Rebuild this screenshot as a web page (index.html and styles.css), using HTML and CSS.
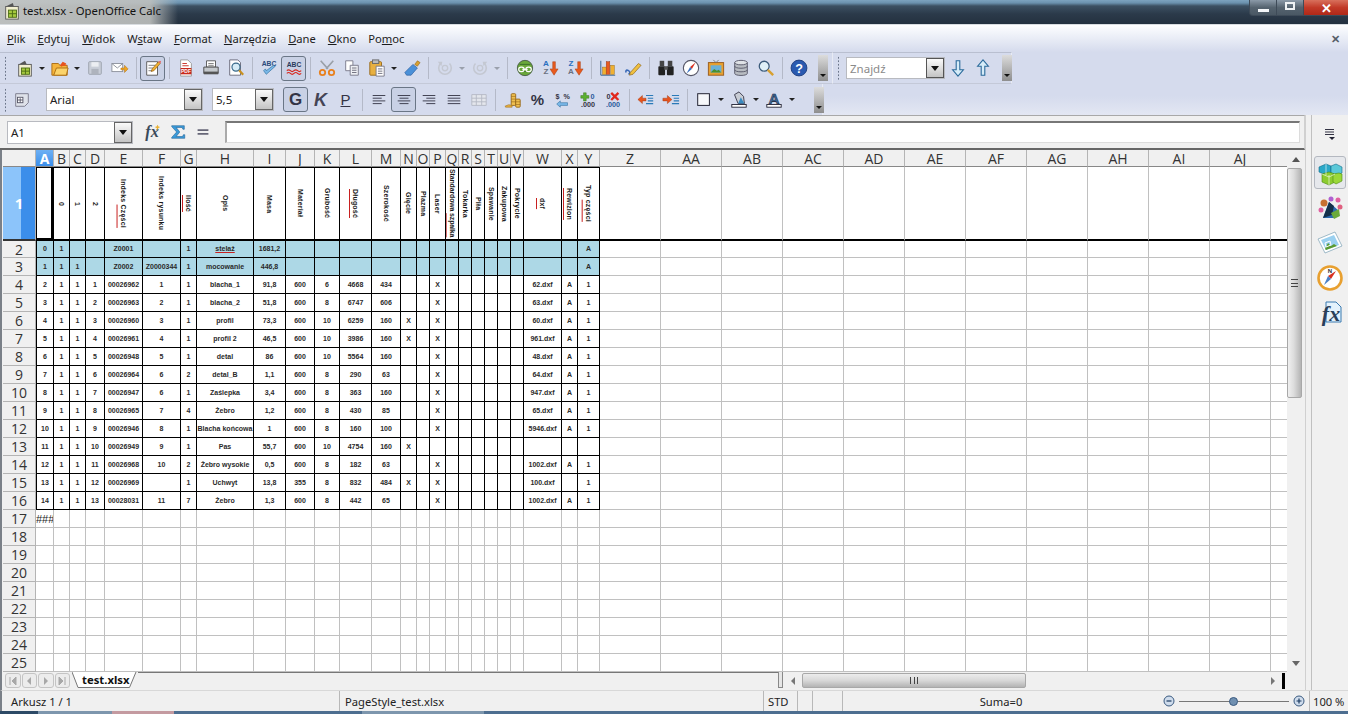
FILE: index.html
```html
<!DOCTYPE html>
<html lang="pl">
<head>
<meta charset="utf-8">
<title>test.xlsx - OpenOffice Calc</title>
<link rel="stylesheet" href="styles.css">
</head>
<body>
<div class="app">
  <header class="titlebar">
    <svg class="appicon" width="18" height="18" viewBox="0 0 20 20"><path d="M3 5l8-4 1 4z" fill="#555"/><rect x="3" y="5" width="14" height="14" fill="#f2efd0" stroke="#555"/><rect x="6" y="9" width="9" height="8" fill="#a5c93c" stroke="#4a6a14"/><path d="M6 13h9M10.500 9v8" stroke="#4a6a14"/></svg>
    <span class="apptitle">test.xlsx - OpenOffice Calc</span>
    <div class="winbtns">
      <span class="wb wmin"><i></i></span>
      <span class="wb wmax"><i></i></span>
      <span class="wb wclose">✕</span>
    </div>
  </header>

  <nav class="menubar">
    <span><u>P</u>lik</span><span><u>E</u>dytuj</span><span><u>W</u>idok</span><span>W<u>s</u>taw</span><span><u>F</u>ormat</span><span><u>N</u>arzędzia</span><span><u>D</u>ane</span><span><u>O</u>kno</span><span>Po<u>m</u>oc</span>
    <span class="docclose">✕</span>
  </nav>

  <div class="toolbars">
    <div class="tbrow">
      <div class="toolbar tb1">
        <span class="grip"></span>
        <span class="b"><svg viewBox="0 0 20 20"><path d="M3 6l7-4 2 4z" fill="#555"/><rect x="3" y="6" width="14" height="13" fill="#f2efd0" stroke="#555"/><rect x="6" y="10" width="9" height="7" fill="#a5c93c" stroke="#4a6a14"/><path d="M6 13.500h9M10.500 10v7" stroke="#4a6a14"/></svg></span>
        <span class="dd"></span>
        <span class="b"><svg viewBox="0 0 20 20"><path d="M1 5h7l2 2h8v11H1z" fill="#f5b43c" stroke="#a86a10"/><path d="M3 18l3-8h13l-2 8z" fill="#fbd36a" stroke="#a86a10"/><path d="M10 7l3-4 4 2-1 1 2 1-6 1 0 1z" fill="#e8531e"/></svg></span>
        <span class="dd"></span>
        <span class="b"><svg viewBox="0 0 20 20"><rect x="3" y="3" width="14" height="14" rx="1" fill="#c9ced8" stroke="#9aa0ac"/><rect x="6" y="3.500" width="8" height="5" fill="#eceef2"/><rect x="6" y="11" width="8" height="6" fill="#aeb3bd"/></svg></span>
        <span class="b"><svg viewBox="0 0 20 20"><rect x="1" y="5" width="12" height="9" fill="#fff" stroke="#8a8f9a"/><path d="M1 5l6 5 6-5" fill="none" stroke="#8a8f9a"/><path d="M11 10h4V7l4 4-4 4v-3h-4z" fill="#f0a520" stroke="#a86a10" stroke-width=".5"/></svg></span>
        <span class="sep"></span>
        <span class="b on"><svg viewBox="0 0 20 20"><path d="M3 3h12v15H3z" fill="#fff" stroke="#555"/><path d="M5 7h8M5 10h6M5 13h4" stroke="#777"/><path d="M8 14l1-3 7-8 2 2-7 8z" fill="#f0b030" stroke="#8a5a10" stroke-width=".7"/><path d="M16 3l2 2 1-2-1-1z" fill="#e86060"/></svg></span>
        <span class="sep"></span>
        <span class="b"><svg viewBox="0 0 20 20"><path d="M4 1h8l4 4v14H4z" fill="#fff" stroke="#999"/><rect x="4" y="10" width="12" height="7" fill="#c8281e"/><text x="10" y="15.800" class="ti6">PDF</text><path d="M6 5h5M6 7.500h7" stroke="#c8281e"/></svg></span>
        <span class="b"><svg viewBox="0 0 20 20"><path d="M5 2h10v7H5z" fill="#fff" stroke="#555"/><path d="M7 5h6M7 7h6" stroke="#777"/><path d="M2 9h16v7H2z" fill="#c4c8cc" stroke="#444"/><rect x="2" y="14" width="16" height="3" fill="#555"/></svg></span>
        <span class="b"><svg viewBox="0 0 20 20"><path d="M3 1h9l3 3v14H3z" fill="#fff" stroke="#667"/><circle cx="10" cy="9" r="4.500" fill="#d6ecf6" stroke="#3a6a8a" stroke-width="1.300"/><path d="M13.500 12.500l4.500 5" stroke="#c89020" stroke-width="2.400"/></svg></span>
        <span class="sep"></span>
        <span class="b"><svg viewBox="0 0 20 20"><text x="10" y="8" class="tabc" fill="#2a4a7a">ABC</text><path d="M4 13l3 4 10-9-2-1-8 6-1-2z" fill="#7ab8e8" stroke="#2a6a9a" stroke-width=".7"/></svg></span>
        <span class="b on"><svg viewBox="0 0 20 20"><text x="10" y="9" class="tabc" fill="#2a3a5a">ABC</text><path d="M2 13q2-2 4 0t4 0 4 0 4 0M2 16q2-2 4 0t4 0 4 0 4 0" fill="none" stroke="#d8281e" stroke-width="1.300"/></svg></span>
        <span class="sep"></span>
        <span class="b"><svg viewBox="0 0 20 20"><path d="M3 2l8 9M17 2l-8 9" stroke="#9aa0a8" stroke-width="1.800"/><circle cx="5" cy="15" r="3" fill="none" stroke="#e8801e" stroke-width="2"/><circle cx="15" cy="15" r="3" fill="none" stroke="#e8801e" stroke-width="2"/></svg></span>
        <span class="b"><svg viewBox="0 0 20 20"><path d="M3 2h8v11H3z" fill="#fff" stroke="#778"/><path d="M8 7h9v11H8z" fill="#eef0f4" stroke="#778"/><path d="M10 10h5M10 12.500h5M10 15h5" stroke="#667"/></svg></span>
        <span class="b"><svg viewBox="0 0 20 20"><rect x="2" y="3" width="13" height="15" rx="1" fill="#e8b040" stroke="#96681a"/><rect x="5" y="1" width="7" height="4" fill="#bbb" stroke="#666"/><path d="M9 8h9v11H9z" fill="#fff" stroke="#778"/><path d="M11 11h5M11 13.500h5M11 16h5" stroke="#667"/></svg></span>
        <span class="dd"></span>
        <span class="b"><svg viewBox="0 0 20 20"><path d="M13 6l3-4 3 2-3 4z" fill="#d8a030" stroke="#8a6010" stroke-width=".6"/><path d="M2 15l9-9 5 4-7 8-5 0z" fill="#4a90d8" stroke="#2a5a9a" stroke-width=".7"/></svg></span>
        <span class="sep wide"></span>
        <span class="b"><svg viewBox="0 0 20 20"><circle cx="10" cy="10" r="3" fill="none" stroke="#c4c8d2" stroke-width="1.500"/><path d="M5 5a7 7 0 1 0 10 0" fill="none" stroke="#c4c8d2" stroke-width="1.800"/><path d="M2 3l5 0-1 5z" fill="#c4c8d2"/></svg></span>
        <span class="dd off"></span>
        <span class="b"><svg viewBox="0 0 20 20"><path d="M15 5a7 7 0 1 1-10 0" fill="none" stroke="#c4c8d2" stroke-width="1.800"/><circle cx="10" cy="10" r="3" fill="none" stroke="#c4c8d2" stroke-width="1.500"/><path d="M18 3l-5 0 1 5z" fill="#c4c8d2"/></svg></span>
        <span class="dd off"></span>
        <span class="sep s10"></span>
        <span class="b"><svg viewBox="0 0 20 20"><circle cx="10" cy="10" r="8.500" fill="#6aa83a" stroke="#4a5a4a"/><path d="M4 6h12M3 14h14" stroke="#3a6a2a"/><rect x="3" y="9" width="6" height="5" rx="2.500" fill="none" stroke="#fff" stroke-width="1.300"/><rect x="11" y="9" width="6" height="5" rx="2.500" fill="none" stroke="#fff" stroke-width="1.300"/><path d="M7 11.500h6" stroke="#fff" stroke-width="1.300"/></svg></span>
        <span class="b"><svg viewBox="0 0 20 20"><text x="5.500" y="8" class="tsort" fill="#2a70c0">A</text><text x="5.500" y="17" class="tsort" fill="#6a7080">Z</text><path d="M13 3h3v8h3l-4.500 7L10 11h3z" fill="#e85a1e" stroke="#a03a10" stroke-width=".5"/></svg></span>
        <span class="b"><svg viewBox="0 0 20 20"><text x="5.500" y="8" class="tsort" fill="#2a70c0">Z</text><text x="5.500" y="17" class="tsort" fill="#6a7080">A</text><path d="M13 3h3v8h3l-4.500 7L10 11h3z" fill="#e85a1e" stroke="#a03a10" stroke-width=".5"/></svg></span>
        <span class="sep"></span>
        <span class="b"><svg viewBox="0 0 20 20"><path d="M2 2v16h16" fill="none" stroke="#2a5a8a"/><rect x="4" y="9" width="4" height="8" fill="#f0b030" stroke="#96681a" stroke-width=".5"/><rect x="8" y="3" width="4" height="14" fill="#e85a1e" stroke="#96381a" stroke-width=".5"/><rect x="13" y="7" width="4" height="10" fill="#f0b030" stroke="#96681a" stroke-width=".5"/></svg></span>
        <span class="b"><svg viewBox="0 0 20 20"><path d="M2 15q0-4 3-2t0 4" fill="none" stroke="#3a6ab8" stroke-width="1.800"/><path d="M7 15l9-10 3 2-9 10-4 1z" fill="#f0c040" stroke="#8a6010" stroke-width=".7"/></svg></span>
        <span class="sep"></span>
        <span class="b"><svg viewBox="0 0 20 20"><rect x="3" y="2" width="5" height="6" fill="#444"/><rect x="12" y="2" width="5" height="6" fill="#444"/><rect x="1.500" y="8" width="7.500" height="10" rx="1" fill="#222"/><rect x="11" y="8" width="7.500" height="10" rx="1" fill="#222"/><rect x="8" y="8" width="4" height="4" fill="#555"/></svg></span>
        <span class="b"><svg viewBox="0 0 20 20"><circle cx="10" cy="10" r="8.500" fill="#fff" stroke="#556" stroke-width="1.200"/><path d="M15 4l-4 7-2-2z" fill="#d83020"/><path d="M5 16l4-7 2 2z" fill="#3a70c0"/></svg></span>
        <span class="b"><svg viewBox="0 0 20 20"><rect x="1.500" y="4" width="17" height="14" fill="#e8a030" stroke="#96581a"/><path d="M10 4l-3-3M10 4l3-3" stroke="#777"/><rect x="4" y="7" width="12" height="8" fill="#6ab0d8"/><path d="M4 15l4-4 3 2 2-1 3 3z" fill="#4a9030"/></svg></span>
        <span class="b"><svg viewBox="0 0 20 20"><path d="M3 4v12c0 3 14 3 14 0V4" fill="#b8bcc2" stroke="#556"/><ellipse cx="10" cy="4" rx="7" ry="2.500" fill="#dfe2e6" stroke="#556"/><path d="M3 8c0 3 14 3 14 0M3 12c0 3 14 3 14 0" fill="none" stroke="#556"/></svg></span>
        <span class="b"><svg viewBox="0 0 20 20"><circle cx="8" cy="8" r="5.500" fill="#dff0f8" stroke="#3a5a7a" stroke-width="1.400"/><path d="M12 12l6 6" stroke="#d8a030" stroke-width="2.600"/></svg></span>
        <span class="sep"></span>
        <span class="b"><svg viewBox="0 0 20 20"><circle cx="10" cy="10" r="8.800" fill="#2a5ab0" stroke="#1a3a7a"/><text x="10" y="15" class="thelp">?</text></svg></span>
        <span class="ovf"></span>
      </div>
      <div class="toolbar tb2">
        <span class="grip g2"></span>
        <div class="combo findc"><span class="ctext gray">Znajdź</span><span class="cbtn dark"></span></div>
        <span class="b b2"><svg viewBox="0 0 20 20"><path d="M8 2h4v10h4l-6 7-6-7h4z" fill="#d6ecf8" stroke="#2a6a9a" stroke-width="1.200"/></svg></span>
        <span class="b"><svg viewBox="0 0 20 20"><path d="M8 18h4V8h4l-6-7-6 7h4z" fill="#d6ecf8" stroke="#2a6a9a" stroke-width="1.200"/></svg></span>
        <span class="ovf o2"></span>
      </div>
    </div>
    <div class="tbrow">
      <div class="toolbar tb3">
        <span class="grip"></span>
        <span class="b stylebtn"><svg viewBox="0 0 20 20"><path d="M3 3h14v10l-4 4H3z" fill="#dfe2ea" stroke="#778"/><rect x="5" y="7" width="6" height="6" fill="#fff" stroke="#556"/><path d="M8 8v5M5 10h6" stroke="#556"/></svg></span>
        <div class="combo fontc"><span class="ctext">Arial</span><span class="cbtn"></span></div>
        <div class="combo sizec"><span class="ctext">5,5</span><span class="cbtn"></span></div>
        <span class="b on tx bold">G</span>
        <span class="b tx ital">K</span>
        <span class="b tx und">P</span>
        <span class="sep"></span>
        <span class="b"><svg viewBox="0 0 20 20"><path d="M3 5h14M3 8h10M3 11h14M3 14h10" stroke="#334"/></svg></span>
        <span class="b on"><svg viewBox="0 0 20 20"><path d="M3 5h14M5 8h10M3 11h14M5 14h10" stroke="#334"/></svg></span>
        <span class="b"><svg viewBox="0 0 20 20"><path d="M3 5h14M7 8h10M3 11h14M7 14h10" stroke="#334"/></svg></span>
        <span class="b"><svg viewBox="0 0 20 20"><path d="M3 5h14M3 8h14M3 11h14M3 14h14" stroke="#334"/></svg></span>
        <span class="b"><svg viewBox="0 0 20 20"><path d="M2 4h16v12H2zM2 8h16M2 12h16M7 4v12M13 4v12" fill="#e4e6ec" stroke="#b4b8c4"/></svg></span>
        <span class="sep s9"></span>
        <span class="b"><svg viewBox="0 0 20 20"><path d="M1 17q4-3 8-1v2H2z" fill="#e8b040" stroke="#96681a" stroke-width=".6"/><rect x="8" y="3" width="5" height="13" rx="1" fill="#f0c050" stroke="#96681a"/><rect x="13" y="9" width="5" height="9" rx="1" fill="#f0c050" stroke="#96681a"/><path d="M8 6h5M8 9h5M8 12h5M13 12h5M13 15h5" stroke="#96681a" stroke-width=".7"/></svg></span>
        <span class="b tx pct">%</span>
        <span class="b"><svg viewBox="0 0 20 20"><text x="4" y="9" class="tnum" fill="#334">$</text><text x="14" y="9" class="tnum" fill="#334">%</text><path d="M15 13H7v-2l-4 3.500L7 18v-2h8z" fill="#7ab8e8" stroke="#2a6a9a" stroke-width=".6"/></svg></span>
        <span class="b"><svg viewBox="0 0 20 20"><path d="M5 2h3v3h3v3H8v3H5V8H2V5h3z" fill="#5ab030" stroke="#3a7020" stroke-width=".5"/><text x="15" y="9" class="tnum" fill="#2a5a9a">0</text><text x="10" y="18" class="tnum" fill="#334">.000</text></svg></span>
        <span class="b"><svg viewBox="0 0 20 20"><text x="5" y="9" class="tnum" fill="#334">0</text><text x="10" y="18" class="tnum" fill="#2a5a9a">.000</text><path d="M8 2l8 8M16 2l-8 8" stroke="#e0281e" stroke-width="2.600"/></svg></span>
        <span class="sep"></span>
        <span class="b"><svg viewBox="0 0 20 20"><path d="M10 5h8M12 8h6M12 11h6M10 14h8" stroke="#2a7ab8" stroke-width="1.200"/><path d="M10 8H6V5l-5 4.500L6 14v-3h4z" fill="#e8531e" stroke="#a03a10" stroke-width=".5"/></svg></span>
        <span class="b"><svg viewBox="0 0 20 20"><path d="M11 5h8M13 8h6M13 11h6M11 14h8" stroke="#2a7ab8" stroke-width="1.200"/><path d="M1 8h5V5l5 4.500L6 14v-3H1z" fill="#e8531e" stroke="#a03a10" stroke-width=".5"/></svg></span>
        <span class="sep"></span>
        <span class="b"><svg viewBox="0 0 20 20"><rect x="3" y="3" width="13" height="13" fill="#f6f7fa" stroke="#223" stroke-width="1.100"/></svg></span>
        <span class="dd"></span>
        <span class="b"><svg viewBox="0 0 20 20"><path d="M5 4l5-3 5 5 1 8H9z" fill="#c8ccd4" stroke="#334"/><path d="M12 7l4 7H9z" fill="#3a8ac0"/><rect x="2" y="15" width="16" height="3" fill="#fff" stroke="#223"/></svg></span>
        <span class="dd"></span>
        <span class="b"><svg viewBox="0 0 20 20"><text x="10" y="14" class="tcolor">A</text><rect x="2" y="15" width="16" height="3" fill="#fff" stroke="#223"/></svg></span>
        <span class="dd d12"></span>
        <span class="ovf o3"></span>
      </div>
    </div>
  </div>

  <div class="main">
    <div class="mainleft">
      <div class="formulabar">
        <div class="combo namec"><span class="ctext">A1</span><span class="cbtn"></span></div>
        <span class="b"><svg viewBox="0 0 20 20"><text x="9" y="16" class="tfx">fx</text><path d="M15 2l1 2 2 .5-2 1L15 8l-1-2.500-2-1 2-.5z" fill="#e8b030"/></svg></span>
        <span class="b"><svg viewBox="0 0 20 20"><path d="M3 3h14v4h-1.500l-1-2H8l4 5-4 5h7l1-2h1.500v4H3v-1l5.500-6L3 4z" fill="#3a9ad8" stroke="#1a5a90" stroke-width=".6"/></svg></span>
        <span class="b"><svg viewBox="0 0 20 20"><path d="M4 7h12v2H4zM4 11h12v2H4z" fill="#667"/></svg></span>
        <div class="finput"></div>
      </div>
      <div class="sheet">
        <div class="gridwrap"><table class="grid" id="grid"></table></div>
        <div class="vscroll">
          <span class="vbtn"><i class="tri up"></i></span>
          <div class="vtrack"><div class="vthumb"><i></i></div></div>
          <span class="vbtn dn"><i class="tri down"></i></span>
        </div>
      </div>
      <div class="tabbar">
        <div class="tabnav">
          <span><svg width="10" height="10" viewBox="0 0 10 10"><path d="M2 1v8M8 1L4 5l4 4z" fill="#a8a8a8" stroke="#a8a8a8"/></svg></span>
          <span><svg width="10" height="10" viewBox="0 0 10 10"><path d="M7 1L3 5l4 4z" fill="#a8a8a8"/></svg></span>
          <span><svg width="10" height="10" viewBox="0 0 10 10"><path d="M3 1l4 4-4 4z" fill="#a8a8a8"/></svg></span>
          <span><svg width="10" height="10" viewBox="0 0 10 10"><path d="M8 1v8M2 1l4 4-4 4z" fill="#a8a8a8" stroke="#a8a8a8"/></svg></span>
        </div>
        <div class="tab">
          <svg width="66" height="17" viewBox="0 0 66 17"><path d="M0 0l6 15.500h51.500L64 0" fill="#fff" stroke="#777"/></svg>
          <span>test.xlsx</span>
        </div>
        <div class="tabrest"></div>
        <span class="tabsplit"></span>
        <div class="hscroll">
          <i class="tri left"></i>
          <div class="hthumb"><i></i></div>
          <i class="tri right"></i>
          <span class="hend"></span>
        </div>
        <div class="corner"></div>
      </div>
    </div>
    <div class="splitter"></div>
    <aside class="sidebar">
      <span class="smenu"><svg width="14" height="14" viewBox="0 0 14 14"><path d="M2 2.500h9M2 5h9M2 7.500h9" stroke="#334"/><path d="M6 10h6l-3 3z" fill="#223"/></svg></span>
      <span class="sb active"><svg width="26" height="26" viewBox="0 0 26 26"><path d="M2 7l7-3 5 2v7l-5 2-7-3z" fill="#2aa8c8" stroke="#106a8a" stroke-width=".6"/><path d="M14 6l5-2 6 3v6l-6 2-5-2z" fill="#5ac8d8" stroke="#106a8a" stroke-width=".6"/><path d="M5 14l7-2 6 2v8l-6 3-7-3z" fill="#8ccc30" stroke="#4a8a10" stroke-width=".6"/><path d="M16 14l6-1 3 1v7l-6 3-3-2z" fill="#9ad838" stroke="#4a8a10" stroke-width=".6"/><path d="M12 15v10M5 14l7 3 6-3M9 4v11" stroke="#fff" stroke-width=".6" fill="none"/></svg></span>
      <span class="sb"><svg width="26" height="26" viewBox="0 0 26 26"><path d="M6 23l6-16 10 9-4 7z" fill="#2a6ab0"/><path d="M12 7l5 4-2 9-9 3z" fill="#15304a"/><path d="M14 18l8-4 1 7-6 3z" fill="#6aaa3a"/><circle cx="7" cy="8" r="3.500" fill="#c87030"/><circle cx="4" cy="15" r="2.500" fill="#e060a0"/><circle cx="14" cy="4" r="2.500" fill="#b060d0"/><circle cx="21" cy="5" r="2.500" fill="#e060a0"/><circle cx="23" cy="12" r="2.500" fill="#e06080"/></svg></span>
      <span class="sb"><svg width="26" height="26" viewBox="0 0 26 26"><path d="M1 9L18 2l7 14-17 7z" fill="#fff" stroke="#8ab" stroke-width=".8"/><path d="M4 10L17 5l5 10-13 5z" fill="#9ad0f0"/><path d="M8 19l3-6 3 3 3-2 3 2-11 4z" fill="#5a9a30"/><path d="M8 13l5-2 1 4-5 2z" fill="none" stroke="#fff"/></svg></span>
      <span class="sb"><svg width="26" height="26" viewBox="0 0 26 26"><circle cx="13" cy="13" r="11.500" fill="#fff" stroke="#e8a030" stroke-width="2.600"/><path d="M19 6l-5 8-3-3z" fill="#d83020"/><path d="M7 20l4-9 3 3z" fill="#4a80c8"/><text x="13" y="8" class="tn">N</text></svg></span>
      <span class="sb"><svg width="26" height="26" viewBox="0 0 26 26"><path d="M9 2h10l5 5v15H9z" fill="#e4f2fc" stroke="#3a7ab0"/><text x="14" y="21" class="tsfx">fx</text></svg></span>
    </aside>
  </div>

  <footer class="statusbar">
    <span class="st s1">Arkusz 1 / 1</span>
    <span class="st s2">PageStyle_test.xlsx</span>
    <span class="st s3">STD</span>
    <span class="st s4"></span>
    <span class="st s5"></span>
    <span class="st s6">Suma=0</span>
    <span class="st s7">
      <svg width="14" height="14" viewBox="0 0 14 14"><circle cx="7" cy="7" r="5" fill="#cfdcec" stroke="#3a5a80"/><path d="M4.500 7h5" stroke="#1a3a60" stroke-width="1.200"/></svg>
      <span class="track"><i></i></span>
      <svg width="14" height="14" viewBox="0 0 14 14"><circle cx="7" cy="7" r="5" fill="#cfdcec" stroke="#3a5a80"/><path d="M4.500 7h5M7 4.500v5" stroke="#1a3a60" stroke-width="1.200"/></svg>
    </span>
    <span class="st s8">100 %</span>
  </footer>
  <div class="taskstrip"></div>
</div>
<script src="script.js"></script>
</body>
</html>
```

FILE: styles.css
```css
* { box-sizing: border-box; }
html, body { margin: 0; padding: 0; height: 100%; overflow: hidden; }
body { font-family: "Noto Sans", "Open Sans", sans-serif; font-size: 11.200px; color: #222; }

.app { width: 1348px; height: 714px; display: flex; flex-direction: column; overflow: hidden; background: #f0f0f0; }

/* title bar */
.titlebar {
  height: 25px; flex: none; display: flex; align-items: flex-start; padding-left: 3px;
  border-bottom: 1px solid #d8dce0;
  background:
    linear-gradient(90deg, rgba(196,198,196,.95) 0, rgba(190,192,190,.9) 150px, rgba(60,80,100,0) 178px),
    linear-gradient(180deg, #7da3bf 0, #6a90ac 3px, #3c5062 6px, #2b3a4a 14px, #24313f 100%);
}
.appicon { margin-top: 2px; flex: none; }
.apptitle { margin: 2px 0 0 2px; font-size: 11.300px; line-height: 18px; color: #111; white-space: nowrap; }
.winbtns { margin-left: auto; display: flex; height: 17px; }
.wb { display: flex; align-items: center; justify-content: center; height: 16px; border: 1px solid #3e4b58; border-top: 0; color: #fff; }
.wmin { width: 28px; border-radius: 0 0 0 4px; background: linear-gradient(180deg, #8b9aa8, #55636f 50%, #4a5864); }
.wmin i { width: 11px; height: 3px; margin-top: 6px; background: #f4f6f8; }
.wmax { width: 27px; border-left: 0; background: linear-gradient(180deg, #8b9aa8, #55636f 50%, #4a5864); }
.wmax i { width: 10px; height: 8px; border: 2px solid #eef2f4; margin-bottom: 3px; }
.wclose { width: 44px; border-left: 0; border-right: 0; font-size: 13px; font-weight: bold; background: linear-gradient(180deg, #d8705c, #c23a28 50%, #b02818); }

/* menu */
.menubar {
  height: 27px; flex: none; display: flex; align-items: center; gap: 12px; padding: 0 0 0 7px;
  font-size: 11.200px; color: #1c1c1c;
  background: linear-gradient(180deg, #fff 0, #f4f6fb 6px, #d5dbed 100%);
}
.menubar u { text-underline-offset: 1px; }
.docclose { margin-left: auto; width: 17px; font-size: 11px; font-weight: bold; color: #555e68; }

/* toolbars */
.toolbars { height: 63px; flex: none; background: linear-gradient(180deg, #d5dbed 0, #d5dbed 70%, #e3e7f3 100%); }
.tbrow { height: 31px; display: flex; align-items: stretch; }
.tbrow:first-child { height: 32px; }
.toolbar { display: flex; align-items: center; background: #d5dbed; border-top: 1px solid #b9bfd0; border-bottom: 1px solid #c4c9d8; border-right: 1px solid #e8ebf4; }
.tb1 { width: 833px; }
.tb2 { width: 179px; }
.tb3 { width: 823px; border-top: 0; border-bottom: 0; }
.grip { flex: none; width: 12px; height: 24px; background: radial-gradient(circle, #6a7488 .7px, transparent 1px) 4px 0 / 3px 3.500px repeat-y; }
.g2 { width: 13px; }
.b { flex: none; width: 25px; height: 25px; display: flex; align-items: center; justify-content: center; border: 1px solid transparent; border-radius: 3px; }
.b svg { width: 18px; height: 18px; display: block; }
.b.on { border-color: #6a7686; background: #c9d1e5; }
.dd { flex: none; width: 10px; height: 25px; display: flex; align-items: center; justify-content: center; }
.dd::after { content: ""; border: 3px solid transparent; border-top: 3.500px solid #222; border-bottom: 0; }
.dd.off::after { border-top-color: #9aa0ac; }
.dd.d12 { width: 12px; }
.sep { flex: none; width: 8px; height: 22px; background: linear-gradient(#b4b9c8, #b4b9c8) center / 1px 100% no-repeat; }
.sep.wide { width: 8px; }
.sep.s10 { width: 10px; }
.sep.s9 { width: 9px; }
.ovf { flex: none; width: 10px; height: 26px; margin-left: 7px; position: relative; background: linear-gradient(180deg, #dcdcdc, #8e8e8e); }
.ovf::after { content: ""; position: absolute; left: 2px; bottom: 4px; border: 3px solid transparent; border-top: 3.500px solid #111; border-bottom: 0; }
.o2 { margin-left: 7px; }
.o3 { margin-left: 16px; }
.tx { font-family: "Liberation Sans", sans-serif; font-weight: bold; font-size: 17px; color: #334; line-height: 1; }
.bold { font-size: 17px; }
.ital { font-style: italic; font-size: 18px; color: #445; }
.und { text-decoration: underline; font-weight: normal; font-size: 15px; }
.pct { font-size: 15px; }
.stylebtn { margin-left: -3px; margin-right: 12px; }

.ti6 { font: bold 5.500px "Liberation Sans", sans-serif; fill: #fff; text-anchor: middle; }
.tabc { font: bold 7.500px "Liberation Sans", sans-serif; text-anchor: middle; }
.tsort { font: bold 9px "Liberation Sans", sans-serif; text-anchor: middle; }
.tnum { font: bold 8px "Liberation Sans", sans-serif; text-anchor: middle; }
.thelp { font: bold 14px "Liberation Sans", sans-serif; fill: #fff; text-anchor: middle; }
.tcolor { font: bold 17px "Liberation Sans", sans-serif; fill: #3a6a9a; stroke: #223; stroke-width: .6px; text-anchor: middle; }
.tfx { font: italic bold 18px "Liberation Serif", serif; fill: #3a4a5a; text-anchor: middle; }
.tn { font: bold 6px "Liberation Sans", sans-serif; fill: #333; text-anchor: middle; }
.tsfx { font: italic bold 22px "Liberation Serif", serif; fill: #2a3f5a; text-anchor: middle; }

/* combos */
.combo { flex: none; height: 23px; display: flex; align-items: center; justify-content: space-between; background: #fff; border: 1px solid #b8bac0; }
.ctext { padding-left: 3px; font-size: 11.500px; color: #222; }
.ctext.gray { color: #8a8a8a; }
.cbtn { flex: none; width: 18px; height: 100%; position: relative; border: 1px solid #666; background: linear-gradient(180deg, #fafafa, #c4c4c4); }
.cbtn::after { content: ""; position: absolute; left: 4px; top: 7px; border: 4px solid transparent; border-top: 5px solid #111; border-bottom: 0; }
.cbtn.dark { border-color: #555; }
.fontc { width: 157px; }
.sizec { width: 62px; margin: 0 9px 0 9px; }
.findc { width: 99px; height: 22px; }
.namec { width: 126px; height: 23px; margin: 0 7px 0 7px; }

/* main */
.main { flex: 1; min-height: 0; display: flex; }
.mainleft { width: 1305px; flex: none; display: flex; flex-direction: column; }
.formulabar { height: 35px; flex: none; display: flex; align-items: center; border-top: 1px solid #a8a8a8; border-bottom: 2px solid #666; background: #f0f0f0; border-right: 1px solid #d0d0d0; }
.finput { width: 1075px; height: 22px; margin-left: 10px; background: #fff; border: 1px solid #dcdcdc; border-top: 2px solid #777; border-left: 2px solid #aaa; }

.sheet { height: 522px; flex: none; display: flex; padding-left: 1px; border-left: 2px solid #7a8088; }
.gridwrap { width: 1284px; height: 522px; overflow: hidden; flex: none; background: #fff; }
.grid { width: 1329px; border-collapse: separate; border-spacing: 0; table-layout: fixed; font-family: "Liberation Sans", Arial, sans-serif; }
.grid td, .grid th { padding: 0; height: 18px; line-height: 10px; border-right: 1px solid #c0c0c0; border-bottom: 1px solid #c0c0c0; text-align: center; vertical-align: middle; overflow: hidden; white-space: nowrap; font-size: 7px; font-weight: bold; color: #2a2a2a; }
.grid th { font-family: "Open Sans", "Noto Sans", sans-serif; line-height: 15px; background: #f0f0f0; font-weight: normal; color: #333; border-color: #b4b4b4; font-size: 14px; }
.grid .hc { height: 17px; border-bottom: 1px solid #888; }
.grid .hc.sel { background: linear-gradient(180deg, #6db0f4, #3b8eea); color: #fff; font-weight: bold; }
.grid .rh { font-size: 14px; }
.grid .rh.sel { background: linear-gradient(90deg, #8cc4fa 0, #8cc4fa 55%, #3b8eea 55%); color: #fff; font-weight: bold; font-size: 15px; border-bottom: 2px solid #333; }
.grid .tall td, .grid .tall th { height: 74px; }
.grid .tall td { border-bottom: 2px solid #000; }
.grid .r2 td, .grid .r2 th { height: 17px; }
.grid td.k { border-right-color: #000; border-bottom-color: #000; }
.grid td.ktop { border-top: 1px solid #000; }
.grid td.kleft { border-left: 1px solid #000; }
.grid td.blue { background: #add8e6; }
.grid td.cur { box-shadow: inset -2px -1px 0 #000; }
.grid td.hash { text-align: left; font-size: 11px; font-weight: normal; color: #222; }
.vt { display: inline-block; vertical-align: middle; writing-mode: vertical-rl; letter-spacing: .2px; line-height: 1; margin: -6px 0; color: #1a1a1a; }
.tight { letter-spacing: -.15px; }
.sp { text-decoration: underline solid #c82020 1px; text-underline-offset: 1px; }

.vscroll { width: 18px; flex: none; height: 100%; display: flex; flex-direction: column; background: #f0f0f0; }
.vbtn { height: 18px; flex: none; display: flex; align-items: center; justify-content: center; }
.vtrack { flex: 1; min-height: 0; }
.vthumb { width: 15px; height: 230px; display: flex; align-items: center; justify-content: center; border: 1px solid #a8a8a8; border-radius: 2px; background: linear-gradient(90deg, #f0f0f0, #dcdcdc 45%, #b4b4b4); }
.vthumb i { width: 7px; height: 8px; border-top: 1px solid #444; border-bottom: 1px solid #444; background: linear-gradient(#444, #444) center / 100% 1px no-repeat; }
.tri { display: block; width: 0; height: 0; border: 4px solid transparent; }
.tri.up { border-bottom: 5px solid #555; border-top: 0; }
.tri.down { border-top: 5px solid #666; border-bottom: 0; }
.tri.left { border-right: 4px solid #777; border-left: 0; }
.tri.right { border-left: 4px solid #777; border-right: 0; }

.tabbar { height: 18px; flex: none; display: flex; align-items: flex-start; padding-left: 5px; background: #f0f0f0; border-left: 2px solid #7a8088; }
.tabnav { display: flex; gap: 1px; padding-top: 1px; width: 65px; flex: none; margin-left: -2px; }
.tabnav span { width: 15.500px; height: 15px; display: flex; align-items: center; justify-content: center; border: 1px solid #c4c4c4; border-radius: 3px; background: #ececec; }
.tab { position: relative; width: 66px; height: 17px; flex: none; margin-left: 2px; font-size: 11.300px; font-weight: bold; color: #111; }
.tab svg { position: absolute; left: 0; top: 0; }
.tab span { position: absolute; left: 10px; top: -1px; line-height: 18px; }
.tabrest { width: 640px; flex: none; height: 1px; background: #777; }
.tabsplit { width: 5px; height: 16px; flex: none; border: 1px solid #888; border-top: 0; background: #e6e6e6; }
.hscroll { flex: 1; height: 17px; display: flex; align-items: center; padding-left: 8px; }
.hthumb { width: 224px; height: 15px; margin-left: 7px; display: flex; align-items: center; justify-content: center; border: 1px solid #a8a8a8; border-radius: 2px; background: linear-gradient(180deg, #ececec, #d8d8d8 50%, #b4b4b4); }
.hthumb i { width: 8px; height: 7px; border-left: 1px solid #444; border-right: 1px solid #444; background: linear-gradient(#444, #444) center / 1px 100% no-repeat; }
.hscroll .right { margin-left: 245px; }
.hend { width: 3px; height: 16px; margin-left: 7px; background: #000; }
.corner { width: 18px; flex: none; }

.splitter { width: 7px; flex: none; background: #f0f0f0; border-right: 1px solid #c0c0c0; border-left: 1px solid #d0d0d0; }
.sidebar { flex: 1; display: flex; flex-direction: column; align-items: center; background: #f0f0f0; padding-top: 12px; }
.smenu { height: 14px; margin-bottom: 15px; }
.sb { width: 32px; height: 33px; flex: none; display: flex; align-items: center; justify-content: center; border: 1px solid transparent; border-radius: 3px; margin-bottom: 2px; }
.sb.active { border-color: #b4b8c0; background: #e6e8ec; }

/* status */
.statusbar { height: 21px; flex: none; display: flex; align-items: center; background: #f0f0f0; border-top: 1px solid #d8d8d8; border-left: 2px solid #7a8088; font-size: 11.200px; color: #222; }
.st { height: 100%; display: flex; align-items: center; flex: none; border-left: 1px solid #b8b8b8; white-space: nowrap; }
.s1 { width: 337px; padding-left: 9px; border-left: 0; }
.s2 { width: 424px; padding-left: 5px; }
.s3 { width: 34px; padding-left: 4px; }
.s4 { width: 15px; }
.s5 { width: 30px; }
.s6 { width: 317px; justify-content: center; }
.s7 { width: 150px; border-left: 0; padding-left: 3px; }
.s8 { flex: 1; padding-left: 3px; }
.track { width: 110px; height: 1px; margin: 0 3px; position: relative; background: #777; }
.track i { position: absolute; left: 50px; top: -4px; width: 9px; height: 9px; border-radius: 50%; background: #6f8fb0; border: 1px solid #3a5a80; }

.taskstrip { height: 3px; flex: none; background: linear-gradient(90deg, #2d4a66 0, #2d4a66 38px, #7d96ad 38px, #7d96ad 112px, #c49aa0 112px, #c49aa0 174px, #4d6e90 174px, #4d6e90 362px, #7d96ad 362px, #7d96ad 484px, #4d6e90 484px); }
```

FILE: script.js
```js
// Builds the spreadsheet table from its data.
var edges = [36,54,70,86,105,143,181,197,254,286,315,340,372,401,417,430,446,459,472,485,498,511,524,562,578,600,661,722,783,844,905,966,1027,1088,1149,1210,1271,1332];
var names = ['A','B','C','D','E','F','G','H','I','J','K','L','M','N','O','P','Q','R','S','T','U','V','W','X','Y','Z','AA','AB','AC','AD','AE','AF','AG','AH','AI','AJ',''];
var heads = ['','0','1','2','Indeks <u class="sp">Części</u>','Indeks rysunku','<u class="sp">Ilość</u>','Opis','Masa','Materiał','Grubość','<u class="sp">Długość</u>','Szerokość','Gięcie','Plazma','Laser','<span class="tight">Standardowa <u class="sp">szpalka</u></span>','Tokarka','Piła','Spawanie','Zakupowa','Pokrycie','<u class="sp">dxf</u>','<u class="sp">Rewizion</u>','Typ <u class="sp">części</u>'];
// A B C D E F G H I J K L M N P W X Y
var data = [
 '0|1|||Z0001||1|<u class="sp">stelaż</u>|1681,2|||||||||A|',
 '1|1|1||Z0002|Z0000344|1|mocowanie|446,8|||||||||A|',
 '2|1|1|1|00026962|1|1|blacha_1|91,8|600|6|4668|434||X|62.dxf|A|1',
 '3|1|1|2|00026963|2|1|blacha_2|51,8|600|8|6747|606||X|63.dxf|A|1',
 '4|1|1|3|00026960|3|1|profil|73,3|600|10|6259|160|X|X|60.dxf|A|1',
 '5|1|1|4|00026961|4|1|profil 2|46,5|600|10|3986|160|X|X|961.dxf|A|1',
 '6|1|1|5|00026948|5|1|detal|86|600|10|5564|160||X|48.dxf|A|1',
 '7|1|1|6|00026964|6|2|detal_B|1,1|600|8|290|63||X|64.dxf|A|1',
 '8|1|1|7|00026947|6|1|Zaślepka|3,4|600|8|363|160||X|947.dxf|A|1',
 '9|1|1|8|00026965|7|4|Żebro|1,2|600|8|430|85||X|65.dxf|A|1',
 '10|1|1|9|00026946|8|1|Blacha końcowa|1|600|8|160|100||X|5946.dxf|A|1',
 '11|1|1|10|00026949|9|1|Pas|55,7|600|10|4754|160|X||||',
 '12|1|1|11|00026968|10|2|Żebro wysokie|0,5|600|8|182|63||X|1002.dxf|A|1',
 '13|1|1|12|00026969||1|Uchwyt|13,8|355|8|832|484|X|X|100.dxf||1',
 '14|1|1|13|00028031|11|7|Żebro|1,3|600|8|442|65||X|1002.dxf|A|1'
];
function expand(line) {
  var f = line.split('|'), r = f.slice(0, 13);   // A..M
  r[13] = f[13];                                 // N
  r[14] = '';                                    // O
  r[15] = f[14];                                 // P
  for (var i = 16; i < 22; i++) r[i] = '';       // Q..V
  r[22] = f[15]; r[23] = f[16]; r[24] = f[17];   // W X Y
  return r;
}
var html = '<colgroup><col style="width:33px">';
for (var c = 0; c < names.length; c++) html += '<col style="width:' + (edges[c + 1] - edges[c]) + 'px">';
html += '</colgroup><tr><th class="hc"></th>';
names.forEach(function (n, i) { html += '<th class="hc' + (i === 0 ? ' sel' : '') + '">' + n + '</th>'; });
html += '</tr><tr class="tall"><th class="rh sel">1</th>';
names.forEach(function (n, i) {
  var cls = i < 25 ? 'k ktop' : '';
  if (i === 0) cls += ' kleft cur';
  html += '<td class="' + cls + '">' + (i > 0 && i < 25 ? '<span class="vt">' + heads[i] + '</span>' : '') + '</td>';
});
html += '</tr>';
for (var r = 2; r <= 25; r++) {
  html += '<tr' + (r === 2 ? ' class="r2"' : '') + '><th class="rh">' + r + '</th>';
  var vals = r <= 16 ? expand(data[r - 2]) : null;
  for (var j = 0; j < names.length; j++) {
    var cl = '';
    if (r <= 16 && j < 25) cl = 'k';
    if (r <= 16 && j === 0) cl += ' kleft';
    if (r <= 3 && j < 25) cl += ' blue';
    var t = vals && j < 25 ? vals[j] : '';
    if (r === 17 && j === 0) { t = '###'; cl = 'hash'; }
    html += '<td class="' + cl + '">' + t + '</td>';
  }
  html += '</tr>';
}
document.getElementById('grid').innerHTML = html;
```
